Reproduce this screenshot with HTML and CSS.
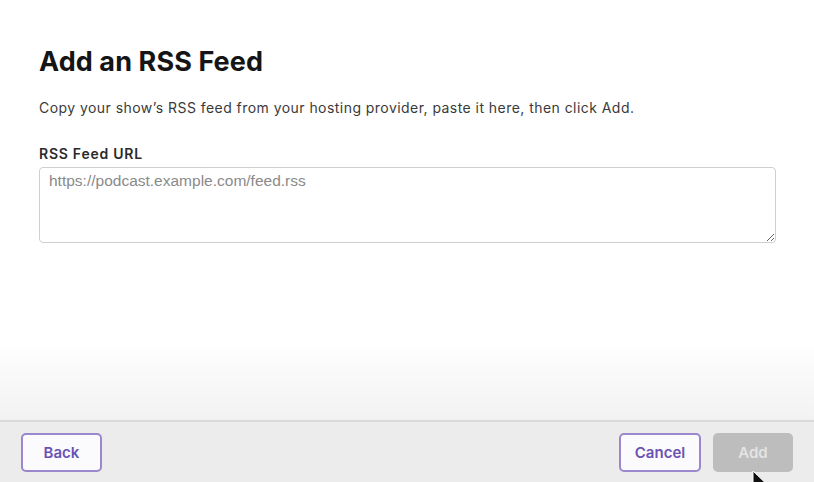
FILE: index.html
```html
<!DOCTYPE html>
<html lang="en">
<head>
<meta charset="utf-8">
<title>Add an RSS Feed</title>
<link rel="stylesheet" href="styles.css">
</head>
<body>
<div class="page">
  <main class="content">
    <h1 class="title">Add an RSS Feed</h1>
    <p class="desc">Copy your show’s RSS feed from your hosting provider, paste it here, then click Add.</p>
    <label class="label" for="feed">RSS Feed URL</label>
    <textarea id="feed" class="field" placeholder="https://podcast.example.com/feed.rss"></textarea>
  </main>
  <footer class="footer">
    <button class="btn btn-outline btn-back">Back</button>
    <div class="actions">
      <button class="btn btn-outline btn-cancel">Cancel</button>
      <button class="btn btn-disabled">Add</button>
    </div>
  </footer>
  <svg class="cursor" width="16" height="22" viewBox="0 0 16 22"><path d="M1 1 L1 17 L5 13 L8 20 L10.5 19 L7.5 12.5 L13 12.5 Z" fill="#111" stroke="#fff" stroke-width="1"/></svg>
</div>
</body>
</html>
```

FILE: styles.css
```css
* { box-sizing: border-box; }
html, body { margin: 0; padding: 0; }
body {
  width: 814px;
  height: 482px;
  overflow: hidden;
  font-family: Inter, "Noto Sans", sans-serif;
  background: #fff;
}
.page {
  position: relative;
  height: 482px;
  display: flex;
  flex-direction: column;
  background: linear-gradient(to bottom, #fff 0, #fff 340px, #f2f2f2 419px);
}
.content {
  flex: 1;
  padding: 44px 38px 0 39px;
  display: flex;
  flex-direction: column;
}
.title {
  margin: 0;
  font-size: 27px;
  font-weight: 700;
  color: #151515;
  letter-spacing: 0.1px;
  line-height: 36px;
}
.desc {
  margin: 19px 0 0;
  font-size: 14px;
  color: #3a3a3a;
  line-height: 18px;
  letter-spacing: 0.45px;
}
.label {
  margin-top: 28px;
  font-size: 14px;
  font-weight: 600;
  color: #2a2a2a;
  line-height: 18px;
  letter-spacing: 0.75px;
}
.field {
  margin-top: 4px;
  width: 737px;
  height: 76px;
  border: 1px solid #cfcfcf;
  border-radius: 4px;
  padding: 4px 9px;
  font-family: "Liberation Sans", Arial, sans-serif;
  font-size: 15.5px;
  resize: vertical;
  background: #fff;
}
.field::placeholder { color: #8a8a8a; }
.footer {
  height: 62px;
  border-top: 2px solid #dadada;
  background: #ececec;
  display: flex;
  align-items: center;
  justify-content: space-between;
  padding: 1px 21px 0 21px;
}
.actions { display: flex; gap: 12px; }
.btn {
  height: 39px;
  border-radius: 5px;
  font-family: Inter, "Noto Sans", sans-serif;
  font-size: 15px;
  font-weight: 600;
  padding: 0;
}
.btn-outline {
  border: 2px solid #9a87cc;
  background: #fbfbfd;
  color: #6a52b4;
}
.btn-back { width: 81px; }
.btn-cancel { width: 82px; }
.btn-disabled {
  width: 80px;
  border: none;
  background: #bdbdbd;
  color: #e4e4e4;
}
.cursor {
  position: absolute;
  left: 752px;
  top: 470px;
}
```
